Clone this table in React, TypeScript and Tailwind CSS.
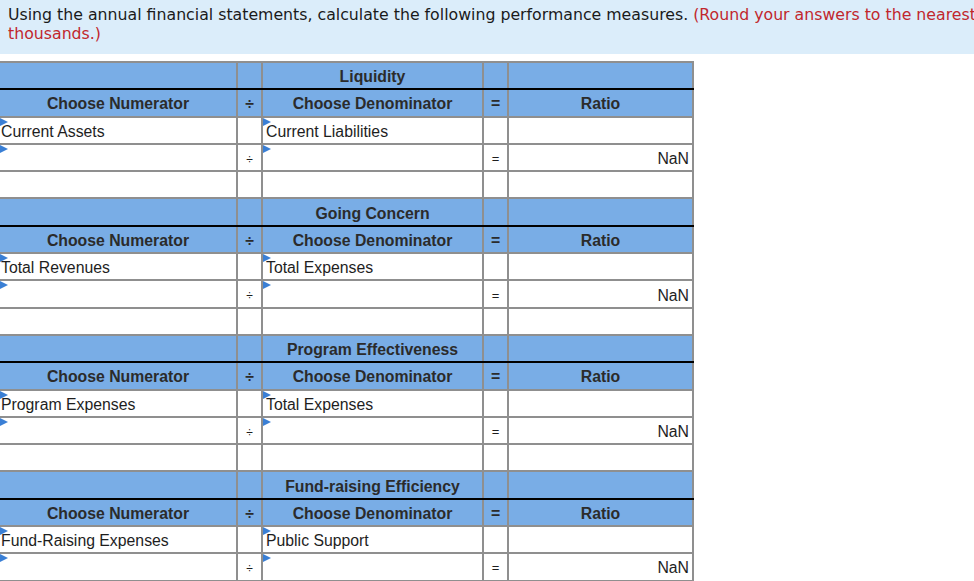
const sections = [
  { title: 'Liquidity', num: 'Current Assets', den: 'Current Liabilities' },
  { title: 'Going Concern', num: 'Total Revenues', den: 'Total Expenses' },
  { title: 'Program Effectiveness', num: 'Program Expenses', den: 'Total Expenses' },
  { title: 'Fund-raising Efficiency', num: 'Fund-Raising Expenses', den: 'Public Support' },
];

function Marker() {
  return (
    <span className="absolute left-0 top-0 w-0 h-0 border-t-[4px] border-b-[4px] border-l-[8px] border-t-transparent border-b-transparent border-l-[#3a7fd5]" />
  );
}

const cell = 'border-2 border-[#8f8f8f] h-[27.3px] p-0 leading-[18px]';
const head = `${cell} bg-[#79ade6] font-bold text-[#2b2b2b] text-center`;

export default function App() {
  return (
    <div className="w-[974px] h-[581px] overflow-hidden bg-white">
      <div className="w-[1010px] h-[54px] bg-[#dbedfa] px-2 pt-[5px] font-['DejaVu_Sans',Verdana,sans-serif] text-[15.75px] leading-[19px] text-[#1a1a1a]">
        <p>
          Using the annual financial statements, calculate the following performance measures.{' '}
          <span className="text-[#c1272d]">(Round your answers to the nearest thousands.)</span>
        </p>
      </div>
      <table className="mt-[7px] -ml-[2px] border-collapse font-['Liberation_Sans',Arial,sans-serif] text-[15.8px] text-[#1e1e1e] table-fixed w-[694px]">
        <colgroup>
          <col className="w-[238px]" />
          <col className="w-[25px]" />
          <col className="w-[221px]" />
          <col className="w-[25px]" />
          <col className="w-[185px]" />
        </colgroup>
        <tbody>
          {sections.map((s) => (
            <Section key={s.title} {...s} />
          ))}
        </tbody>
      </table>
    </div>
  );
}

function Section({ title, num, den }: { title: string; num: string; den: string }) {
  return (
    <>
      <tr>
        <td className={`${head} border-b-black`} />
        <td className={`${head} border-b-black`} />
        <td className={`${head} border-b-black pt-[3px]`}>{title}</td>
        <td className={`${head} border-b-black`} />
        <td className={`${head} border-b-black`} />
      </tr>
      <tr>
        <td className={`${head} pt-[3px]`}>Choose Numerator</td>
        <td className={`${head} pt-[3px]`}>÷</td>
        <td className={`${head} pt-[3px]`}>Choose Denominator</td>
        <td className={`${head} pt-[3px]`}>=</td>
        <td className={`${head} pt-[3px]`}>Ratio</td>
      </tr>
      <tr>
        <td className={`${cell} relative pl-[1px] pt-[3px]`}>
          <Marker />
          {num}
        </td>
        <td className={cell} />
        <td className={`${cell} relative pl-[3px] pt-[3px]`}>
          <Marker />
          {den}
        </td>
        <td className={cell} />
        <td className={cell} />
      </tr>
      <tr>
        <td className={`${cell} relative`}>
          <Marker />
        </td>
        <td className={`${cell} text-center text-[12px] pt-[4px]`}>÷</td>
        <td className={`${cell} relative`}>
          <Marker />
        </td>
        <td className={`${cell} text-center text-[13px] pt-[3px]`}>=</td>
        <td className={`${cell} text-right pr-[3px] pt-[3px]`}>NaN</td>
      </tr>
      <tr>
        <td className={cell} />
        <td className={cell} />
        <td className={cell} />
        <td className={cell} />
        <td className={cell} />
      </tr>
    </>
  );
}
